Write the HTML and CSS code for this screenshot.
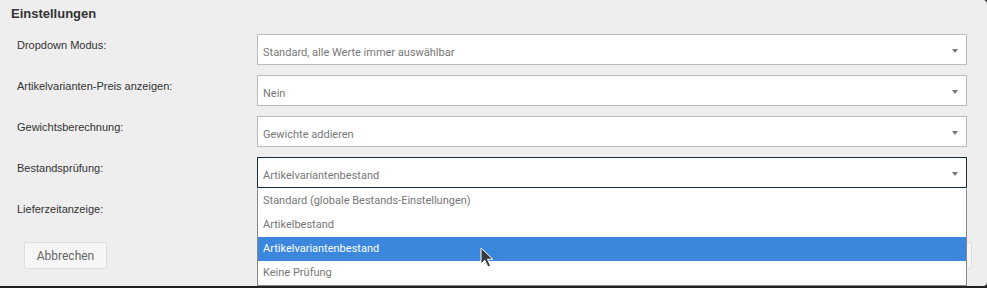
FILE: index.html
```html
<!DOCTYPE html>
<html lang="de">
  <head>
    <meta charset="UTF-8" />
    <meta name="viewport" content="width=device-width, initial-scale=1.0" />
    <title>Einstellungen</title>
    <link rel="stylesheet" href="styles.css">
  </head>

  <body>
    <div class="panel">
      <h2 class="title">Einstellungen</h2>

      <div class="rows">
        <div class="row">
          <label class="label">Dropdown Modus:</label>
          <div class="select">Standard, alle Werte immer auswählbar</div>
        </div>
        <div class="row">
          <label class="label">Artikelvarianten-Preis anzeigen:</label>
          <div class="select">Nein</div>
        </div>
        <div class="row">
          <label class="label">Gewichtsberechnung:</label>
          <div class="select">Gewichte addieren</div>
        </div>
        <div class="row">
          <label class="label">Bestandsprüfung:</label>
          <div class="select focus">
            Artikelvariantenbestand
            <ul class="options">
              <li>Standard (globale Bestands-Einstellungen)</li>
              <li>Artikelbestand</li>
              <li class="active">Artikelvariantenbestand</li>
              <li>Keine Prüfung</li>
            </ul>
          </div>
        </div>
        <div class="row">
          <label class="label">Lieferzeitanzeige:</label>
          <div class="select"></div>
        </div>
      </div>

      <div class="footer">
        <button class="btn">Abbrechen</button>
        <button class="btn">Speichern</button>
      </div>
    </div>

    <svg class="cursor" width="15" height="22" viewBox="0 0 15 22">
      <path d="M1 1 L1 17 L4.8 13.2 L8 20 L10.6 18.9 L7.5 12.2 L12.8 12.2 Z" fill="#3a3a3a" stroke="#fff" stroke-width="1" stroke-linejoin="round"/>
    </svg>
  </body>
</html>
```

FILE: styles.css
```css
*{
  padding: 0;
  margin: 0;
  box-sizing: border-box;
}
body {
  width: 987px;
  height: 288px;
  background-color: #222;
  overflow: hidden;
  position: relative;
}
ul {
  list-style: none;
}
.panel {
  height: 286px;
  background-color: #eee;
  border-radius: 0 4px 4px 0;
  padding: 6px 20px 0 11px;
}
.title {
  font-family: "Liberation Sans", Arial, sans-serif;
  font-size: 13px;
  line-height: 15px;
  font-weight: bold;
  color: #333;
  margin-bottom: 13px;
}
.rows {
  display: flex;
  flex-direction: column;
  gap: 10px;
}
.row {
  display: flex;
  align-items: flex-start;
  height: 31px;
}
.label {
  width: 246px;
  flex-shrink: 0;
  padding: 5px 0 0 6px;
  font-family: "Liberation Sans", Arial, sans-serif;
  font-size: 11px;
  line-height: 13px;
  color: #333;
}
.select {
  position: relative;
  flex: 1;
  height: 31px;
  padding: 11px 5px 0;
  background-color: #fff;
  border: 1px solid #bbb;
  font-family: Roboto, sans-serif;
  font-size: 11px;
  line-height: 14px;
  color: #777;
}
.select::after {
  content: "";
  position: absolute;
  right: 8px;
  top: 14px;
  border-left: 3.5px solid transparent;
  border-right: 3.5px solid transparent;
  border-top: 4px solid #777;
}
.select.focus {
  border-color: #17303f;
  z-index: 2;
}
.options {
  position: absolute;
  top: calc(100% + 1px);
  left: -1px;
  right: -1px;
  background-color: #fff;
  border: 1px solid #888;
  border-top-color: #fff;
}
.options li {
  height: 24px;
  line-height: 24px;
  padding-left: 5px;
  color: #777;
}
.options li.active {
  background-color: #3a87dd;
  color: #fff;
}
.footer {
  display: flex;
  justify-content: space-between;
  margin: 13px -5px 0 13px;
}
.btn {
  width: 83px;
  height: 27px;
  background-color: #f6f6f6;
  border: 1px solid #dcdcdc;
  border-radius: 2px;
  font-family: Roboto, sans-serif;
  font-size: 12px;
  color: #666;
}
.cursor {
  position: absolute;
  left: 480px;
  top: 247px;
  z-index: 5;
}
```
